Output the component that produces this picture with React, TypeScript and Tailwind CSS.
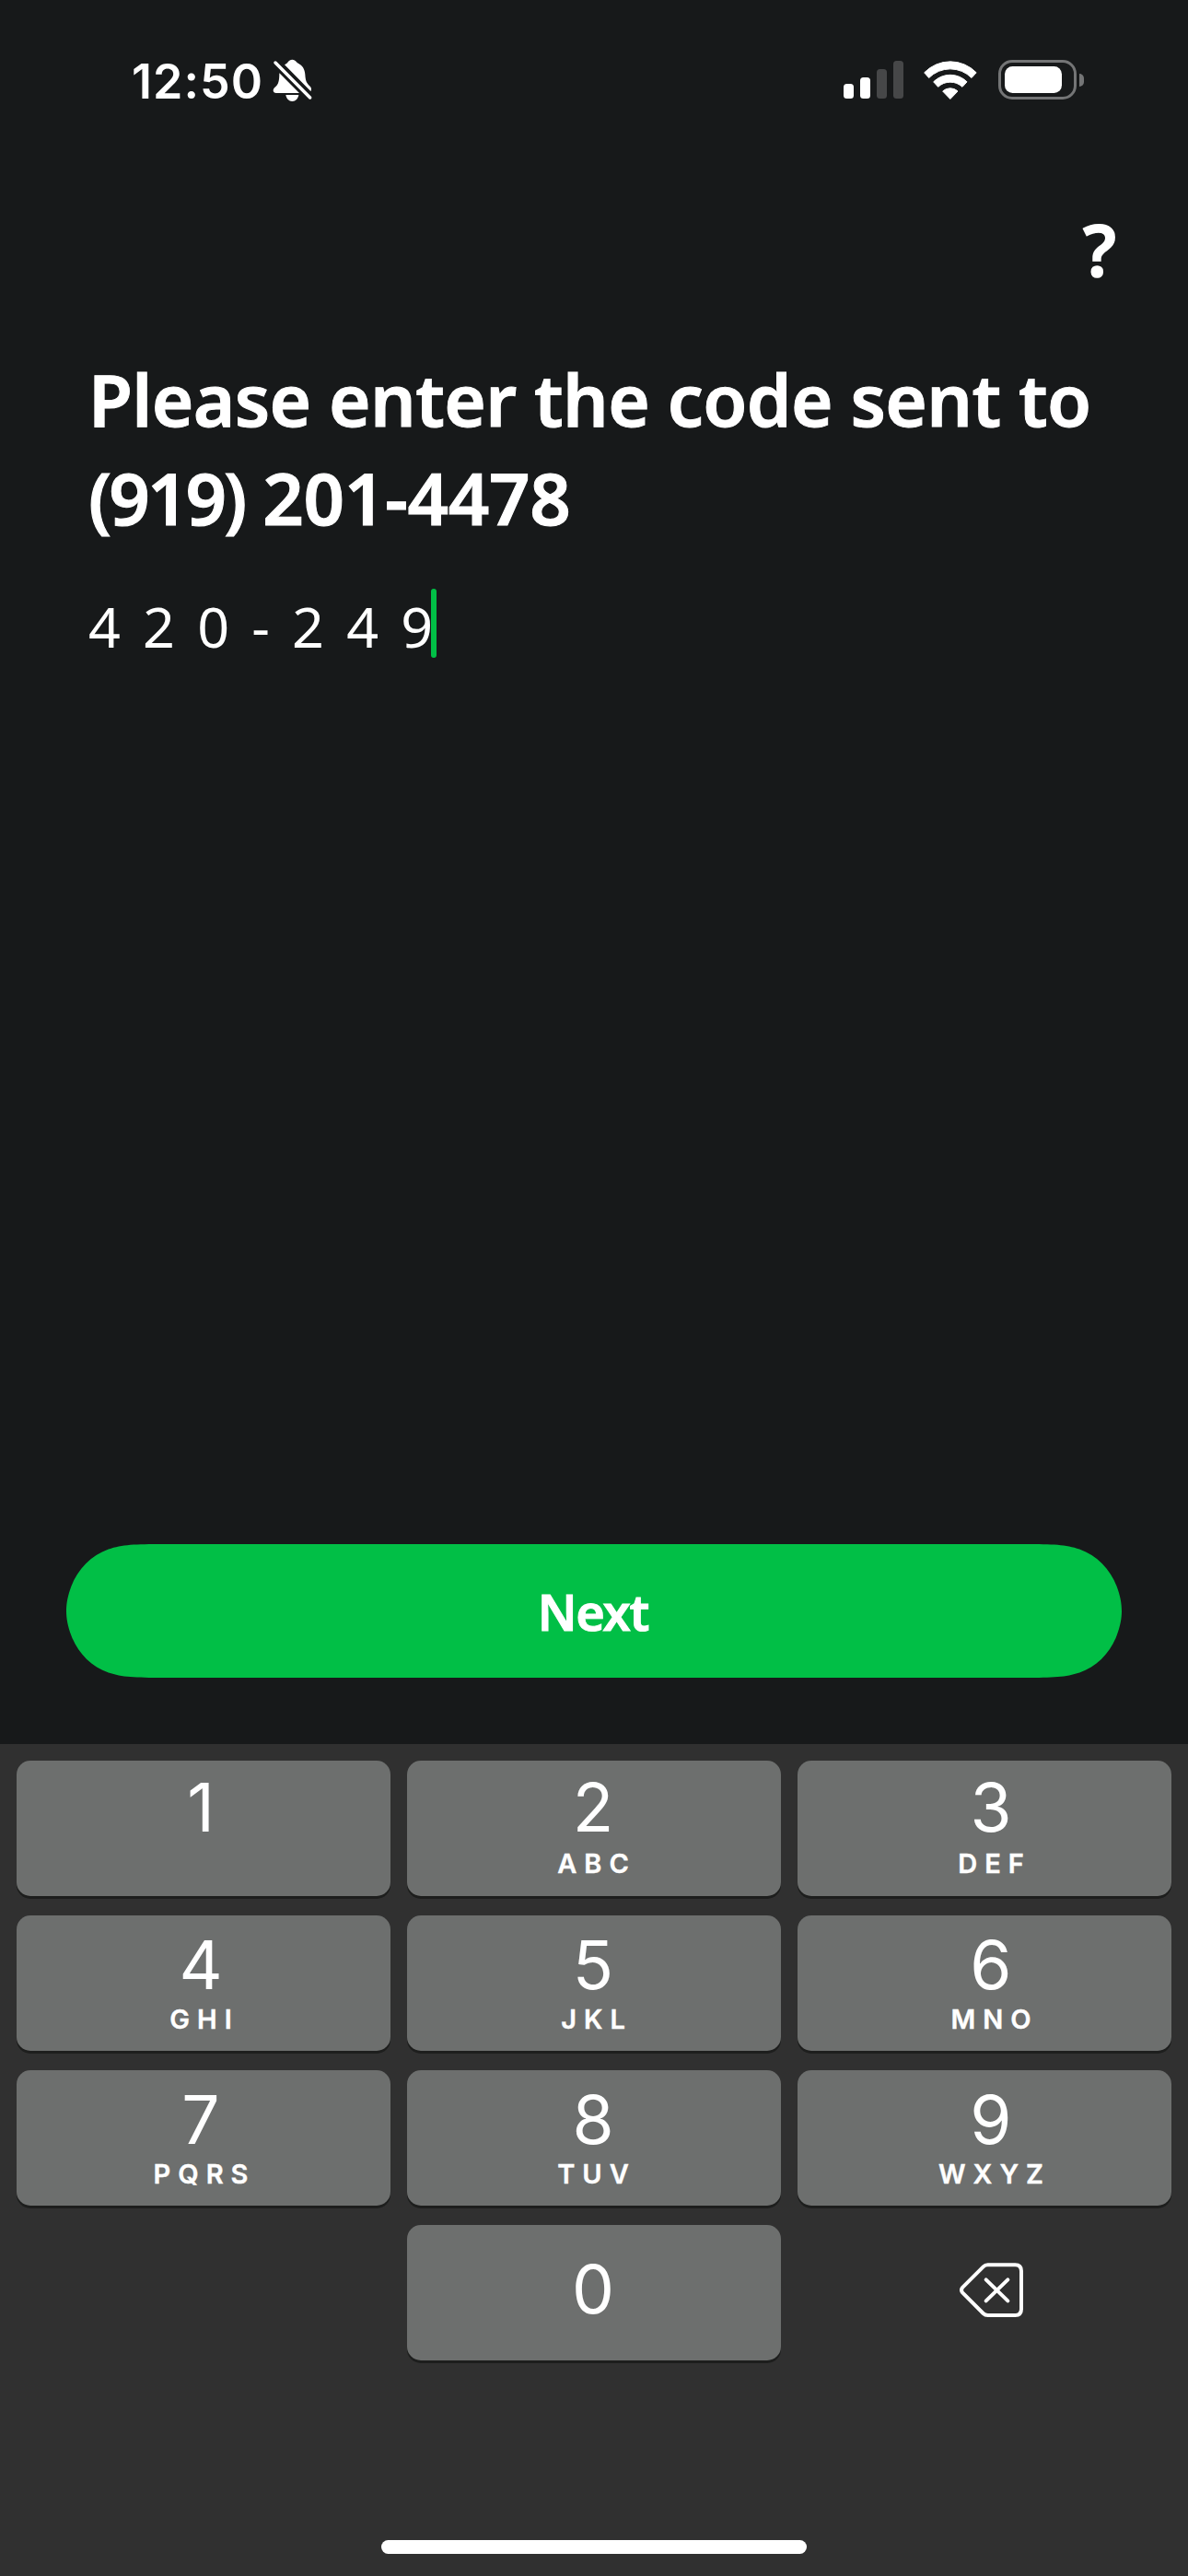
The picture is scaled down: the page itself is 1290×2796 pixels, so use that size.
import type { ReactNode } from "react";

const BUTTON_SHAPE =
  "[clip-path:path('M110.8_0C78.9_0_63_0_48.6_4.7L45.8_5.4C27_12.3_12.3_27_5.4_45.8C1.6_56_0_64_0_72.5C0_81_1.6_89_5.4_99.2C12.3_118_27_132.7_45.8_139.6L48.6_140.3C63_145_78.9_145_110.8_145H1035.2C1067.1_145_1083_145_1097.4_140.3L1100.2_139.6C1119_132.7_1133.7_118_1140.6_99.2C1144.4_89_1146_81_1146_72.5C1146_64_1144.4_56_1140.6_45.8C1133.7_27_1119_12.3_1100.2_5.4L1097.4_4.7C1083_0_1067.1_0_1035.2_0Z')]";

function SilentBell() {
  return (
    <svg viewBox="525 72 135 144" className="h-[48px] w-[45px]" fill="#fff" aria-hidden="true">
      <path d="M567 94C573 91 576 89 578 85C582 80 586 77 592 77C598 77 602 80 606 85C608 88 612 90 616 92C629 100 633 112 634 126C635 146 639 155 650 164C653 167 654 170 654 173C654 176 653 179 652 180Z" />
      <path d="M550 121L615 186H540C534 186 530 183 530 178C530 173 533 169 538 165C547 157 550 147 550 121Z" />
      <path d="M571 192H613C611 204 603 213 592 213C581 213 573 204 571 192Z" />
      <path d="M537 87L650 201" stroke="#fff" strokeWidth="10.5" strokeLinecap="round" />
    </svg>
  );
}

function Signal() {
  return (
    <div className="flex h-[41px] w-[65px] items-end gap-[7px]">
      <div className="h-4 w-[11px] rounded-[3.5px] bg-white" />
      <div className="h-[23px] w-[11px] rounded-[3.5px] bg-white" />
      <div className="h-8 w-[11px] rounded-[3.5px] bg-[#464748]" />
      <div className="h-[41px] w-[11px] rounded-[3.5px] bg-[#464748]" />
    </div>
  );
}

function Wifi() {
  return (
    <svg viewBox="341 75 174 126" className="h-[42px] w-[58px]" fill="#fff" stroke="#fff" strokeWidth="3" strokeLinejoin="round" aria-hidden="true">
      <path d="M343 113.500A118 118 0 0 1 512.500 113.500L497 130.500A98 98 0 0 0 358 130.500Z" />
      <path d="M373 143.500A77 77 0 0 1 482 143.500L467 160A58 58 0 0 0 388 160Z" />
      <path d="M403 174A36 36 0 0 1 452 174L427.500 199.500Z" />
    </svg>
  );
}

function Battery() {
  return (
    <div className="flex items-center gap-[3px]">
      <div className="flex h-[43px] w-[85px] items-center rounded-[15px] border-[3px] border-[#747576] pl-1">
        <div className="h-[29px] w-[62px] rounded-[8.5px] bg-white" />
      </div>
      <div className="h-3.5 w-[5px] rounded-r-full bg-[#747576]" />
    </div>
  );
}

function DeleteIcon() {
  return (
    <svg viewBox="606 708 207 177" className="h-[59px] w-[69px]" fill="none" stroke="#fff" strokeWidth="12" strokeLinecap="round" strokeLinejoin="round" aria-hidden="true">
      <path d="M698 715H787Q807 715 807 735V859Q807 879 787 879H698Q689 879 683 873L616 806Q608 797 616 788L683 721Q689 715 698 715Z" />
      <path d="M692 763L763 832M763 763L692 832" />
    </svg>
  );
}

function Key({ digit, letters, first }: { digit: string; letters?: string; first?: boolean }) {
  return (
    <button className="flex h-[147px] flex-col items-center rounded-[15px] bg-[#6d6f6e] text-white shadow-[0_3px_0_#1d1e1d]">
      <span className={`text-[73px] leading-[73px] ${digit === "0" ? "mt-[33px]" : first ? "mt-3.5" : "mt-[17px]"}`}>{digit}</span>
      {letters && (
        <span className={`pl-2 text-[29px] leading-[29px] font-semibold tracking-[8px] [-webkit-text-stroke:0.4px_white] ${first ? "mt-[10px]" : "mt-2"}`}>{letters}</span>
      )}
    </button>
  );
}

/* Labels in the outer columns lean slightly away from the key centres. */
function Column({ className, children }: { className?: string; children: ReactNode }) {
  return <div className={`flex flex-1 flex-col gap-[21px] ${className ?? ""}`}>{children}</div>;
}

export default function App() {
  return (
    <main className="flex h-[2796px] w-[1290px] flex-col overflow-hidden bg-[#17191a] font-['Inter',sans-serif] text-white">
      <header className="flex h-[174px] items-start justify-between pt-[63px] pr-[113px] pl-[143px]">
        <div className="flex items-start gap-[10px]">
          <span className="w-[142px] text-[52px] leading-[52px] font-semibold tracking-[1px] whitespace-nowrap">12:50</span>
          <SilentBell />
        </div>
        <div className="flex items-center pt-[2px]">
          <Signal />
          <div className="ml-[22px]"><Wifi /></div>
          <div className="ml-[23px]"><Battery /></div>
        </div>
      </header>

      <div className="flex h-[204px] justify-end pt-[43px] pr-[78px]">
        <button className="h-[106px] font-['Noto_Sans',sans-serif] text-[78px] leading-[106px] font-semibold [-webkit-text-stroke:1.5px_white]">?</button>
      </div>

      <section className="flex-1 pt-[2px] pl-[96px] font-['Noto_Sans',sans-serif]">
        <h1 className="text-[78px] leading-[107px] font-semibold whitespace-nowrap [-webkit-text-stroke:1px_white]">
          <span className="block tracking-[-0.65px]">Please enter the code sent to</span>
          <span className="block tracking-[-0.4px]">
            <span className="tracking-[-3px]">(919)</span> 201-4478
          </span>
        </h1>
        <div className="mt-[45px] flex items-start">
          <span className="mt-[3px] text-[61px] leading-[75px] tracking-[24.2px]">420-249</span>
          <span className="-ml-[26px] h-[75px] w-1.5 rounded-full bg-[#01bf46]" />
        </div>
      </section>

      <div className="px-[72px] pb-[72px]">
        <button className={`flex h-[145px] w-full justify-center bg-[#01bf46] pt-[36px] pr-[2px] font-['Noto_Sans',sans-serif] text-[54px] leading-[74px] font-semibold tracking-[-1.2px] [-webkit-text-stroke:1px_white] ${BUTTON_SHAPE}`}>
          Next
        </button>
      </div>

      <section className="flex h-[903px] flex-col items-center bg-[#303030] px-[18px] pt-[18px]">
        <div className="flex w-full gap-[18px]">
          <Column className="[&_span]:-translate-x-[3px]">
            <Key digit="1" first />
            <Key digit="4" letters="GHI" />
            <Key digit="7" letters="PQRS" />
          </Column>
          <Column className="[&_span]:-translate-x-px">
            <Key digit="2" letters="ABC" first />
            <Key digit="5" letters="JKL" />
            <Key digit="8" letters="TUV" />
            <Key digit="0" />
          </Column>
          <Column className="[&_span]:translate-x-[7px]">
            <Key digit="3" letters="DEF" first />
            <Key digit="6" letters="MNO" />
            <Key digit="9" letters="WXYZ" />
            <button className="flex h-[147px] items-start justify-center pt-[41px] pl-[15px]">
              <DeleteIcon />
            </button>
          </Column>
        </div>
        <div className="mt-[195px] h-[15px] w-[462px] rounded-full bg-white" />
      </section>
    </main>
  );
}
